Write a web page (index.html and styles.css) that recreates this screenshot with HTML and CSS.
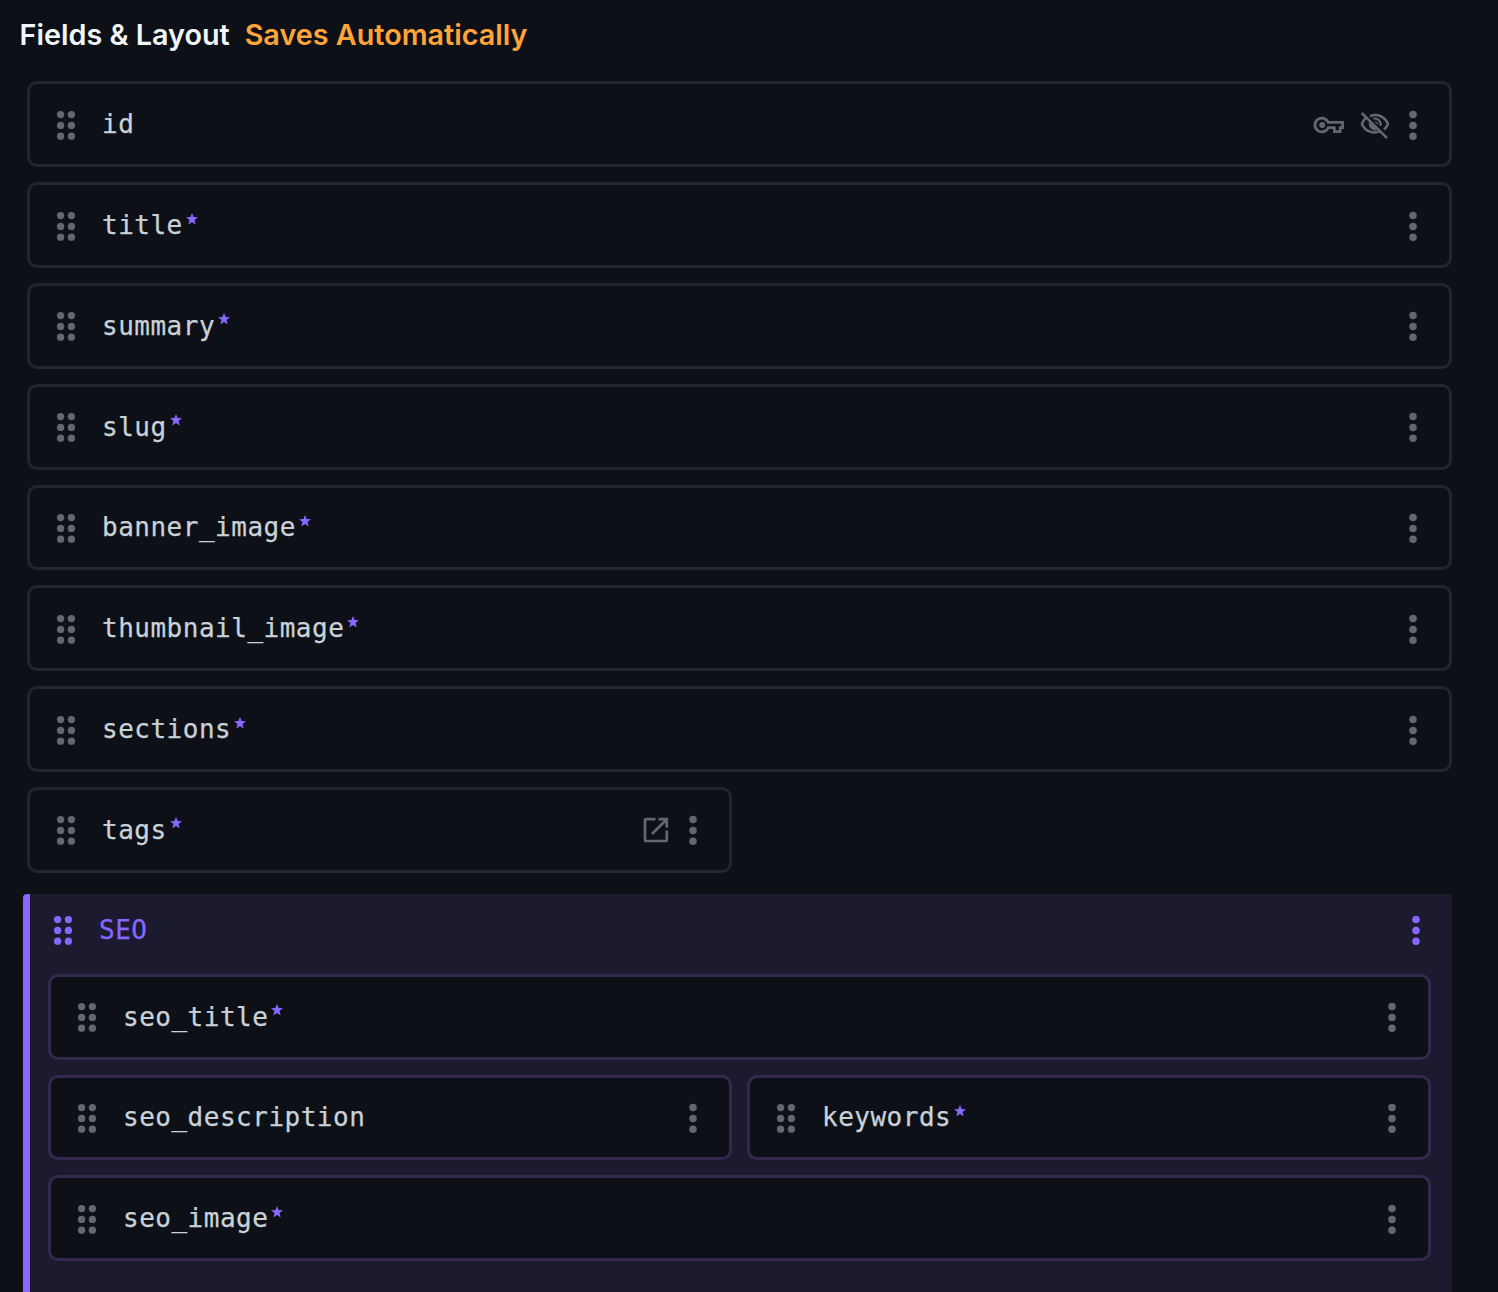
FILE: index.html
```html
<!DOCTYPE html>
<html lang="en">
<head>
<meta charset="utf-8">
<title>Fields &amp; Layout</title>
<link rel="stylesheet" href="styles.css">
</head>
<body>
<svg class="sprite" aria-hidden="true">
  <symbol id="grip" viewBox="0 0 20 30"><circle cx="4.6" cy="4.6" r="3.65"/><circle cx="15.4" cy="4.6" r="3.65"/><circle cx="4.6" cy="15.4" r="3.65"/><circle cx="15.4" cy="15.4" r="3.65"/><circle cx="4.6" cy="26.2" r="3.65"/><circle cx="15.4" cy="26.2" r="3.65"/></symbol>
  <symbol id="more" viewBox="0 0 10 30"><circle cx="5" cy="4.6" r="3.75"/><circle cx="5" cy="15.4" r="3.75"/><circle cx="5" cy="26.2" r="3.75"/></symbol>
  <symbol id="star" viewBox="0 0 24 24"><path d="M12 0l3.300 8.200 8.700.4-6.900 5.500L19.400 23 12 18.200 4.600 23l2.300-8.900L0 8.600l8.700-.4z"/></symbol>
  <symbol id="key" viewBox="0 0 32 32"><path fill="none" stroke="currentColor" stroke-width="2.700" d="M15.200 13.300H29.600V18.700H27.200V22.700H21.400V18.700H15.200A6.900 6.900 0 1 1 15.200 13.300Z"/><circle cx="9.200" cy="16" r="3"/></symbol>
  <symbol id="hidden" viewBox="0 0 32 32"><g fill="none" stroke="currentColor" stroke-width="2.600"><path d="M2.800 4L28 29.200"/><path d="M11 7.300C18.500 4 26 7.800 29 14.900C28.200 17.200 26.900 19 25 20.600"/><path d="M6.900 8.900C5.100 10.600 3.700 12.600 2.900 14.900C6.100 22.300 14.200 25.300 21.200 22.100"/><path stroke-width="2.200" d="M14.300 9.700C18.600 8.700 22.500 12.400 21.500 17"/></g><path d="M10.500 12L19.100 20.600A6.400 6.400 0 0 1 10.500 12ZM15.300 12.200A3.500 3.500 0 0 1 19.100 16Z"/></symbol>
  <symbol id="open" viewBox="0 0 32 32"><path fill="none" stroke="currentColor" stroke-width="2.700" d="M15.500 5.200H6.500Q5 5.200 5 6.700V25.500Q5 27 6.500 27H25.300Q26.800 27 26.800 25.500V16.500M18.500 5.200H26.800V13.700M26.800 5.200L12 20"/></symbol>
</svg>

<header class="heading"><h1 class="heading-title">Fields &amp; Layout</h1><span class="heading-note">Saves Automatically</span></header>

<main class="fields">
  <div class="field"><svg class="grip"><use href="#grip"/></svg><span class="name">id</span><span class="actions"><svg class="icon"><use href="#key"/></svg><svg class="icon icon-hidden"><use href="#hidden"/></svg><svg class="more"><use href="#more"/></svg></span></div>
  <div class="field"><svg class="grip"><use href="#grip"/></svg><span class="name">title</span><svg class="star"><use href="#star"/></svg><span class="actions"><svg class="more"><use href="#more"/></svg></span></div>
  <div class="field"><svg class="grip"><use href="#grip"/></svg><span class="name">summary</span><svg class="star"><use href="#star"/></svg><span class="actions"><svg class="more"><use href="#more"/></svg></span></div>
  <div class="field"><svg class="grip"><use href="#grip"/></svg><span class="name">slug</span><svg class="star"><use href="#star"/></svg><span class="actions"><svg class="more"><use href="#more"/></svg></span></div>
  <div class="field"><svg class="grip"><use href="#grip"/></svg><span class="name">banner_image</span><svg class="star"><use href="#star"/></svg><span class="actions"><svg class="more"><use href="#more"/></svg></span></div>
  <div class="field"><svg class="grip"><use href="#grip"/></svg><span class="name">thumbnail_image</span><svg class="star"><use href="#star"/></svg><span class="actions"><svg class="more"><use href="#more"/></svg></span></div>
  <div class="field"><svg class="grip"><use href="#grip"/></svg><span class="name">sections</span><svg class="star"><use href="#star"/></svg><span class="actions"><svg class="more"><use href="#more"/></svg></span></div>
  <div class="field half"><svg class="grip"><use href="#grip"/></svg><span class="name">tags</span><svg class="star"><use href="#star"/></svg><span class="actions"><svg class="icon icon-open"><use href="#open"/></svg><svg class="more"><use href="#more"/></svg></span></div>
</main>

<section class="group">
  <div class="group-header"><svg class="grip"><use href="#grip"/></svg><span class="name">SEO</span><span class="actions"><svg class="more"><use href="#more"/></svg></span></div>
  <div class="group-fields">
    <div class="field"><svg class="grip"><use href="#grip"/></svg><span class="name">seo_title</span><svg class="star"><use href="#star"/></svg><span class="actions"><svg class="more"><use href="#more"/></svg></span></div>
    <div class="field half"><svg class="grip"><use href="#grip"/></svg><span class="name">seo_description</span><span class="actions"><svg class="more"><use href="#more"/></svg></span></div>
    <div class="field half"><svg class="grip"><use href="#grip"/></svg><span class="name">keywords</span><svg class="star"><use href="#star"/></svg><span class="actions"><svg class="more"><use href="#more"/></svg></span></div>
    <div class="field"><svg class="grip"><use href="#grip"/></svg><span class="name">seo_image</span><svg class="star"><use href="#star"/></svg><span class="actions"><svg class="more"><use href="#more"/></svg></span></div>
  </div>
</section>
</body>
</html>
```
FILE: styles.css
```css
* { box-sizing: border-box; }

body {
  margin: 0;
  height: 1292px;
  overflow: hidden;
  display: flex;
  flex-direction: column;
  background: #0d1117;
  color: #c9d1d9;
}

svg { display: block; flex: none; fill: currentColor; }

.sprite { display: none; }

.heading {
  display: flex;
  flex: none;
  gap: 15px;
  height: 81.4px;
  padding: 17px 0 0 19.5px;
  font: 600 28.75px/36px Inter, sans-serif;
}

.heading-title { margin: 0; font: inherit; color: #f0f6fc; }
.heading-note { color: #ffa439; }

.fields,
.group-fields {
  display: grid;
  flex: none;
  grid-template-columns: 1fr 1fr;
  grid-auto-rows: 85.8px;
  gap: 15px;
}

.fields { margin: 0 46px 0 27px; }

.field {
  grid-column: span 2;
  display: flex;
  align-items: center;
  padding: 1px 31px 0 26px;
  border: 3px solid #21262e;
  border-radius: 10px;
  background: #0d1117;
}

.half { grid-column: span 1; }

.grip { width: 20px; height: 30px; color: #666672; }

.name {
  margin: -1px 0 0 26px;
  font: 26px/36px "DejaVu Sans Mono", monospace;
  letter-spacing: 0.5px;
  white-space: pre;
  -webkit-text-stroke: 0.25px currentColor;
}

.star { width: 12px; height: 12px; margin: -14px 0 0 3px; color: #8866ff; }

.actions { display: flex; align-items: center; margin-left: auto; color: #666672; }

.more { width: 10px; height: 30px; }
.icon { width: 32px; height: 32px; margin-right: 14.5px; }
.icon-hidden { margin-right: 17px; }
.icon-open { margin-right: 16.5px; }

.group {
  flex: 1;
  margin: 21px 46px 0 23px;
  padding: 0 21px 0 18px;
  border-left: 7px solid #8866ff;
  border-top-left-radius: 4px;
  background: #1c1a2e;
}

.group-header { display: flex; align-items: center; height: 80px; padding: 0 10px 7px 5px; }

.group-header .grip,
.group-header .name,
.group-header .actions { color: #8866ff; }

.group .field { border-color: #33294f; }
```
